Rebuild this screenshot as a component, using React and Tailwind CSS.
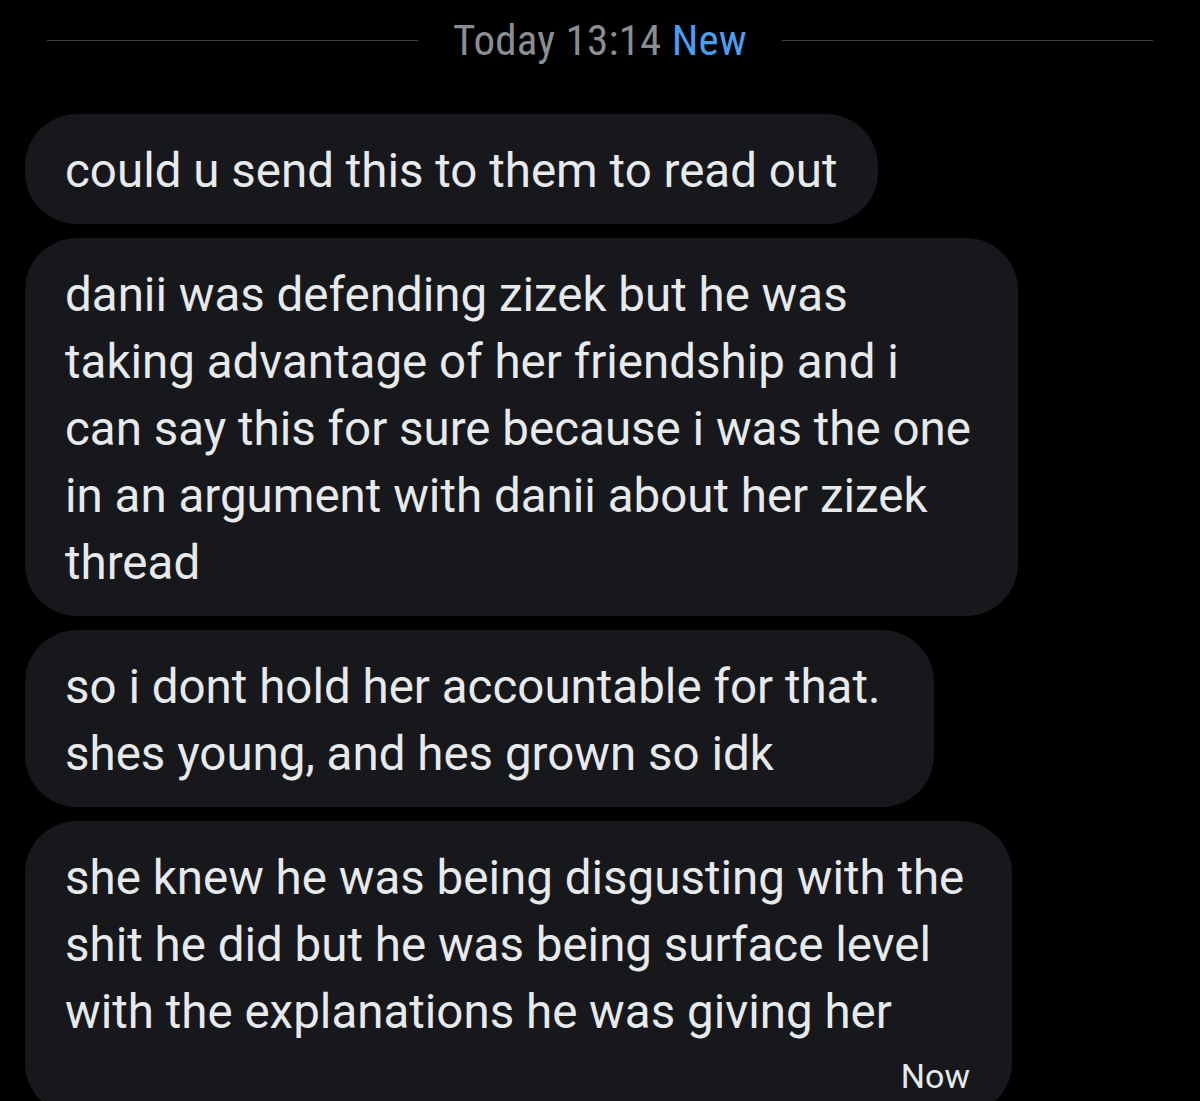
import React from 'react'

const messages = [
  { width: 'w-[853px]', lines: ['could u send this to them to read out'] },
  {
    width: 'w-[993px]',
    lines: [
      'danii was defending zizek but he was',
      'taking advantage of her friendship and i',
      'can say this for sure because i was the one',
      'in an argument with danii about her zizek',
      'thread',
    ],
  },
  { width: 'w-[909px]', lines: ['so i dont hold her accountable for that.', 'shes young, and hes grown so idk'] },
  {
    width: 'w-[987px]',
    lines: [
      'she knew he was being disgusting with the',
      'shit he did but he was being surface level',
      'with the explanations he was giving her',
    ],
    time: 'Now',
  },
]

function Bubble({ msg }) {
  return (
    <div className={`${msg.width} bg-[#16181c] rounded-[52px] pl-10 pr-10 pt-[24px] pb-[19px]`}>
      {msg.lines.map((line, i) => (
        <p key={i} className="whitespace-nowrap text-[47.5px] leading-[67px] text-[#e7e9ea]">
          {line}
        </p>
      ))}
      {msg.time && (
        <div className="flex justify-end pr-[2px] pt-[10px]">
          <span className="text-[34px] leading-[40px] text-[#e7e9ea]">{msg.time}</span>
        </div>
      )}
    </div>
  )
}

export default function App() {
  return (
    <div className="w-[1200px] h-[1101px] overflow-hidden bg-black font-['Roboto',sans-serif]">
      {/* date divider */}
      <div className="flex items-center gap-[35px] px-[47px] pt-[16px]">
        <div className="flex-1 h-px bg-[#3e4145]" />
        <div className="font-['Roboto_Condensed','Roboto',sans-serif] text-[43px] leading-[48px] tracking-[0.005em]">
          <span className="text-[#8b8d91]">Today 13:14 </span>
          <span className="text-[#4a9ef0]">New</span>
        </div>
        <div className="flex-1 h-px bg-[#3e4145]" />
      </div>

      <div className="flex flex-col gap-[14px] pl-[25px] pt-[50px]">
        {messages.map((m, i) => (
          <Bubble key={i} msg={m} />
        ))}
      </div>
    </div>
  )
}
